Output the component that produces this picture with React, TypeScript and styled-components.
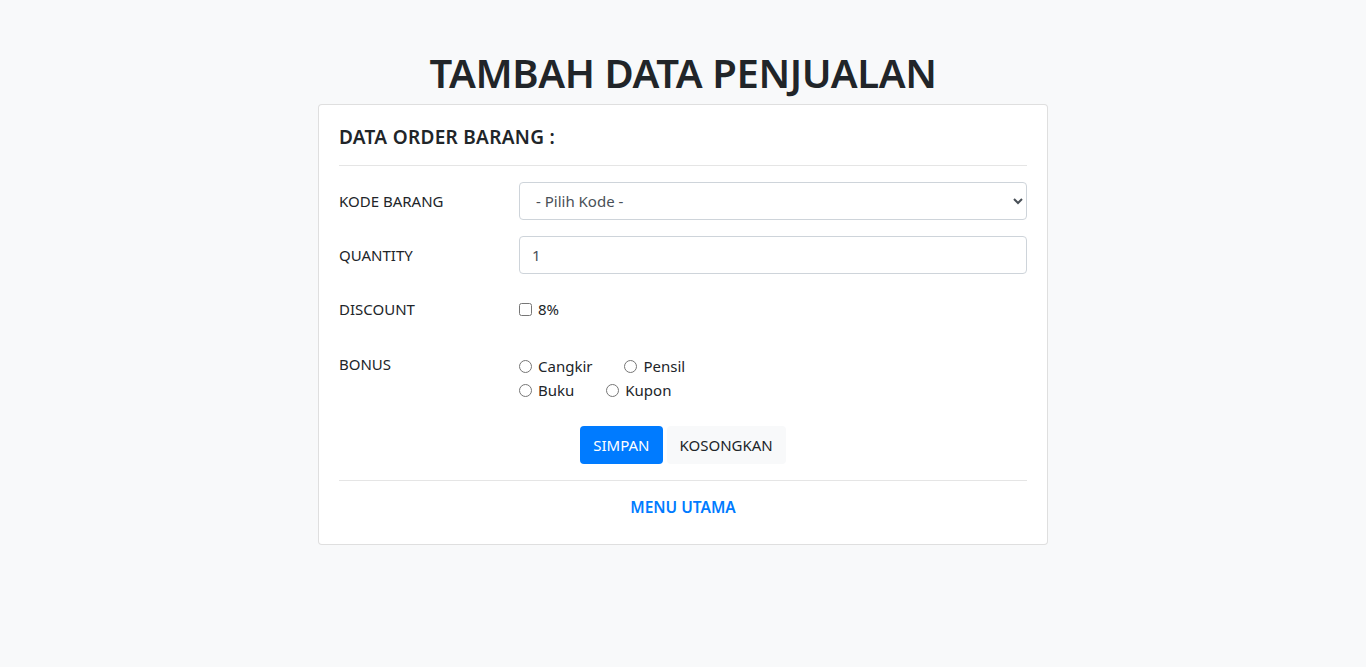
import styled, { createGlobalStyle } from "styled-components";

const GlobalStyle = createGlobalStyle`
    html, body {
        margin: 0;
        padding: 0;
        background: #f8f9fa;
        color: #212529;
        font-family: "Noto Sans", "Open Sans", sans-serif;
        font-size: 16px;
        line-height: 1.5;
    }
    * {
        box-sizing: border-box;
    }
`;

const Page = styled.div`
    display: flex;
    flex-direction: column;
    align-items: center;
    padding-top: 49px;
`;

const Title = styled.h1`
    margin: 0 0 7px;
    font-size: 40px;
    font-weight: 600;
    line-height: 48px;
    letter-spacing: -0.4px;
`;

const Card = styled.div`
    width: 730px;
    background: #fff;
    border: 1px solid rgba(0, 0, 0, 0.125);
    border-radius: 4px;
    padding: 20px 20px 25px;
`;

const CardTitle = styled.h5`
    margin: 0;
    font-size: 19px;
    font-weight: 600;
    line-height: 24px;
    letter-spacing: 0.3px;
`;

const Divider = styled.hr<{ $after?: number }>`
    margin: 16px 0 ${({ $after }) => $after ?? 16}px;
    border: 0;
    border-top: 1px solid rgba(0, 0, 0, 0.1);
`;

const Row = styled.div<{ $gap?: number }>`
    display: grid;
    grid-template-columns: 180px 1fr;
    margin-bottom: ${({ $gap }) => $gap ?? 16}px;
`;

const Label = styled.label`
    padding-top: 7px;
    font-size: 15px;
    line-height: 24px;
`;

const Select = styled.select`
    width: 100%;
    height: 38px;
    padding: 6px 8px 6px 12px;
    font-family: inherit;
    font-size: 15px;
    color: #495057;
    background: #fff;
    border: 1px solid #ced4da;
    border-radius: 4px;
`;

const Input = styled.input`
    width: 100%;
    height: 38px;
    padding: 6px 12px;
    font-family: inherit;
    font-size: 15px;
    color: #495057;
    border: 1px solid #ced4da;
    border-radius: 4px;
`;

const Options = styled.div<{ $top: number }>`
    display: flex;
    flex-direction: column;
    padding-top: ${({ $top }) => $top}px;
`;

const OptionLine = styled.div`
    display: flex;
    gap: 32px;
`;

const Check = styled.label`
    display: inline-flex;
    align-items: center;
    gap: 6px;
    font-size: 15px;
    line-height: 24px;

    input {
        margin: 0;
        width: 13px;
        height: 13px;
    }
`;

const Actions = styled.div`
    display: flex;
    justify-content: center;
    gap: 4px;
`;

const Button = styled.button<{ $primary?: boolean }>`
    height: 38px;
    padding: 0 13px;
    font-family: inherit;
    font-size: 15px;
    border: 0;
    border-radius: 4px;
    color: ${({ $primary }) => ($primary ? "#fff" : "#212529")};
    background: ${({ $primary }) => ($primary ? "#007bff" : "#f8f9fa")};
`;

const MenuLink = styled.a`
    display: block;
    text-align: center;
    color: #007bff;
    font-size: 15.5px;
    font-weight: 600;
    line-height: 24px;
    text-decoration: none;
`;

export default function App() {
    return (
        <>
            <GlobalStyle />
            <Page>
                <Title>TAMBAH DATA PENJUALAN</Title>
                <Card>
                    <CardTitle>DATA ORDER BARANG :</CardTitle>
                    <Divider />
                    <Row>
                        <Label>KODE BARANG</Label>
                        <Select defaultValue="">
                            <option value="">- Pilih Kode -</option>
                        </Select>
                    </Row>
                    <Row>
                        <Label>QUANTITY</Label>
                        <Input defaultValue="1" />
                    </Row>
                    <Row $gap={24}>
                        <Label>DISCOUNT</Label>
                        <Options $top={7}>
                            <Check>
                                <input type="checkbox" /> 8%
                            </Check>
                        </Options>
                    </Row>
                    <Row $gap={24}>
                        <Label>BONUS</Label>
                        <Options $top={9}>
                            <OptionLine>
                                <Check>
                                    <input type="radio" name="bonus" /> Cangkir
                                </Check>
                                <Check>
                                    <input type="radio" name="bonus" /> Pensil
                                </Check>
                            </OptionLine>
                            <OptionLine>
                                <Check>
                                    <input type="radio" name="bonus" /> Buku
                                </Check>
                                <Check>
                                    <input type="radio" name="bonus" /> Kupon
                                </Check>
                            </OptionLine>
                        </Options>
                    </Row>
                    <Actions>
                        <Button $primary>SIMPAN</Button>
                        <Button>KOSONGKAN</Button>
                    </Actions>
                    <Divider $after={14} />
                    <MenuLink href="#">MENU UTAMA</MenuLink>
                </Card>
            </Page>
        </>
    );
}
